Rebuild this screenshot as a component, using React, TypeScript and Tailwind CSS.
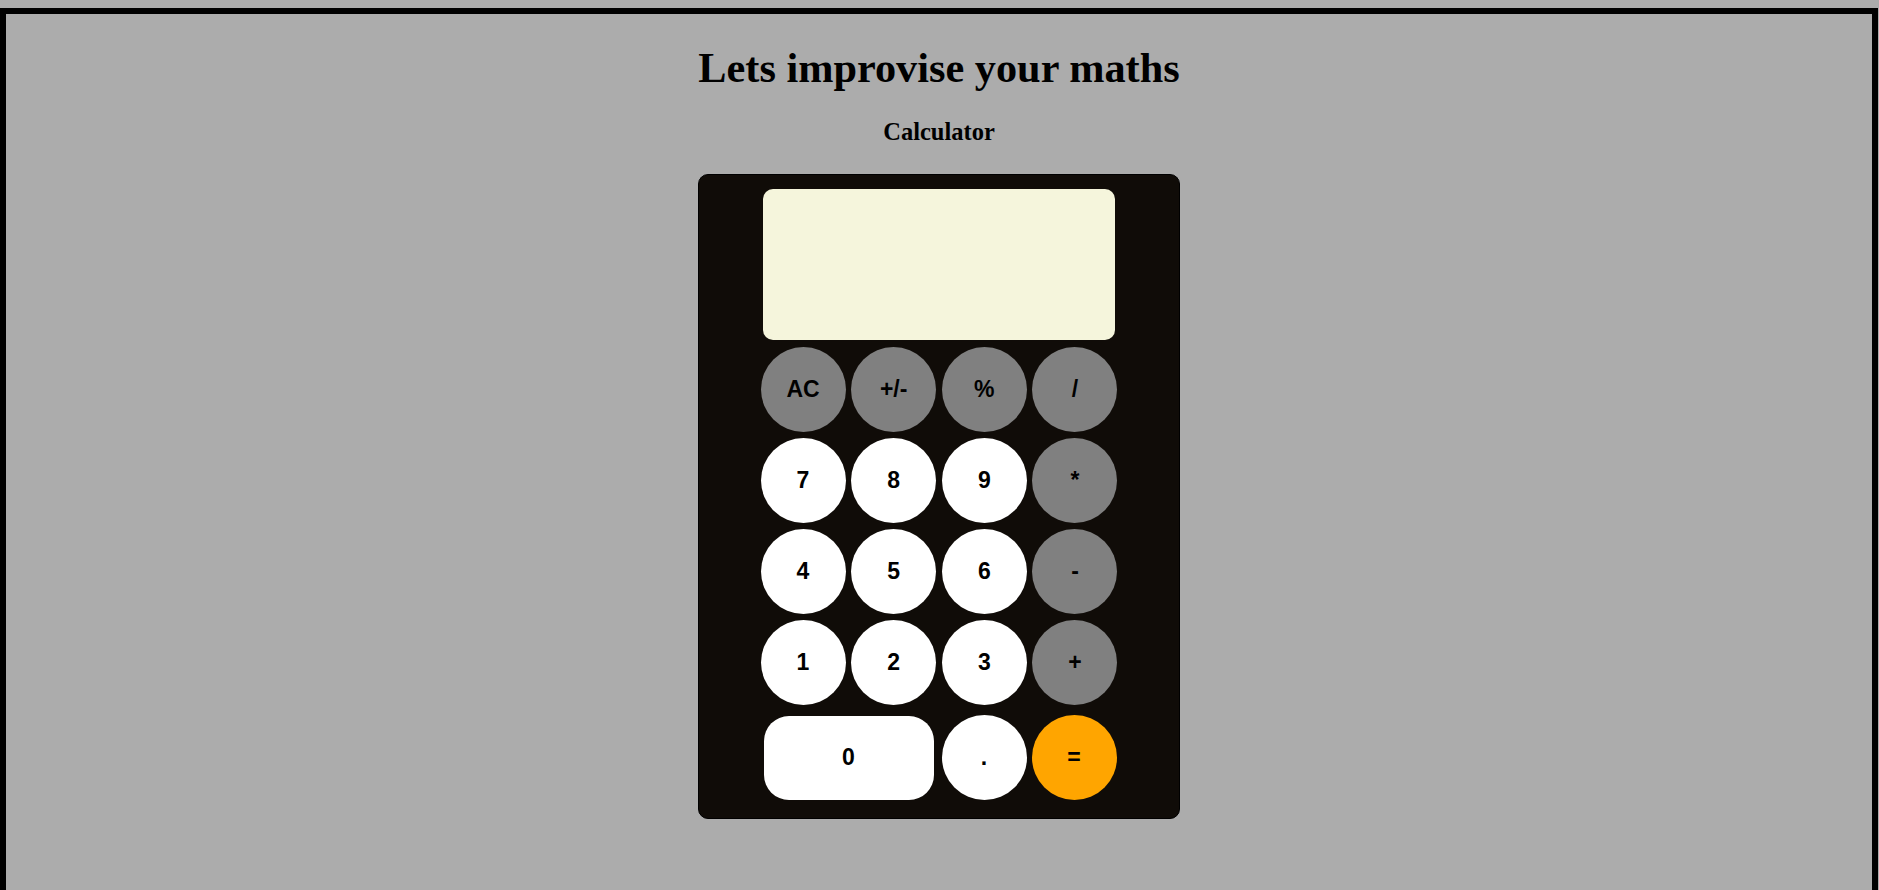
const rows: { label: string; kind: "op" | "num" | "eq" }[][] = [
  [
    { label: "AC", kind: "op" },
    { label: "+/-", kind: "op" },
    { label: "%", kind: "op" },
    { label: "/", kind: "op" },
  ],
  [
    { label: "7", kind: "num" },
    { label: "8", kind: "num" },
    { label: "9", kind: "num" },
    { label: "*", kind: "op" },
  ],
  [
    { label: "4", kind: "num" },
    { label: "5", kind: "num" },
    { label: "6", kind: "num" },
    { label: "-", kind: "op" },
  ],
  [
    { label: "1", kind: "num" },
    { label: "2", kind: "num" },
    { label: "3", kind: "num" },
    { label: "+", kind: "op" },
  ],
];

const colors = {
  op: "bg-[#808080]",
  num: "bg-white",
  eq: "bg-[#ffa500]",
};

function Key({ label, kind }: { label: string; kind: "op" | "num" | "eq" }) {
  return (
    <button
      className={`${colors[kind]} w-[85px] h-[85px] rounded-full flex items-center justify-center text-[23px] font-bold text-black`}
    >
      {label}
    </button>
  );
}

export default function App() {
  return (
    <div className="h-screen overflow-hidden bg-[#acacac] font-['Liberation_Sans',Arial,sans-serif]">
      <div className="mt-2 w-[1878px] h-[900px] border-[6px] border-black">
        <h1 className="pt-[30px] text-center font-['Liberation_Serif','Times_New_Roman',serif] font-bold text-[42.3px] leading-[48px] text-black">
          Lets improvise your maths
        </h1>
        <h2 className="mt-[26px] text-center font-['Liberation_Serif','Times_New_Roman',serif] font-bold text-[24.5px] leading-[28px] text-black">
          Calculator
        </h2>

        <div className="mx-auto mt-[28px] w-[482px] rounded-[10px] border border-black bg-[#100c08] pt-[14px] pb-[18px]">
          <div className="mx-auto h-[151px] w-[352px] rounded-[10px] bg-[#f5f5dc]" />

          <div className="mx-auto mt-[7px] flex w-[357px] flex-col gap-y-[6px]">
            {rows.map((row, i) => (
              <div key={i} className="flex justify-between">
                {row.map((k) => (
                  <Key key={k.label} label={k.label} kind={k.kind} />
                ))}
              </div>
            ))}
            <div className="mt-[4px] flex items-center gap-x-[5px]">
              <button className="mx-[3px] h-[84px] w-[170px] rounded-[25px] bg-white text-[23px] font-bold text-black">
                0
              </button>
              <Key label="." kind="num" />
              <Key label="=" kind="eq" />
            </div>
          </div>
        </div>
      </div>
    </div>
  );
}
